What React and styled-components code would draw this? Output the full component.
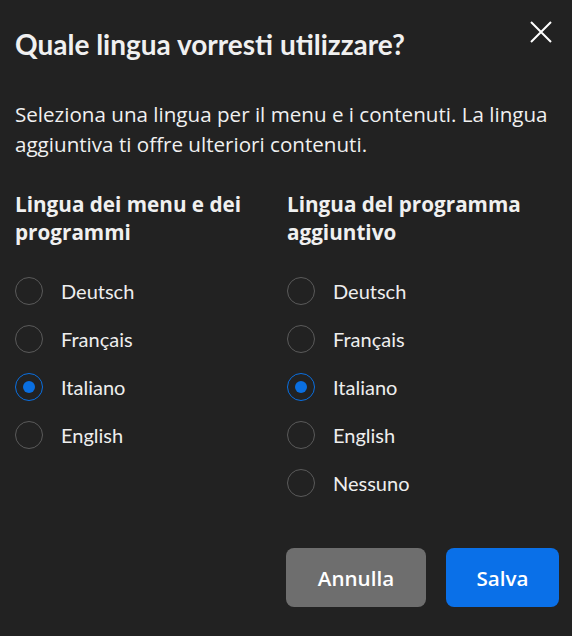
import React, { useState } from "react";
import styled, { createGlobalStyle } from "styled-components";

const GlobalStyle = createGlobalStyle`
  html, body {
    margin: 0;
    padding: 0;
    background: #222222;
  }
  body {
    font-family: Lato, "Noto Sans", sans-serif;
    color: #f2f2f2;
  }
`;

const Dialog = styled.div`
  width: 572px;
  height: 636px;
  box-sizing: border-box;
  background: #222222;
  padding: 24px 13px 0 15px;
  display: flex;
  flex-direction: column;
`;

const Header = styled.div`
  display: flex;
  justify-content: space-between;
  align-items: flex-start;
`;

const Title = styled.h1`
  margin: 0;
  font-size: 28px;
  line-height: 40px;
  font-weight: 700;
  color: #f0f0f0;
`;

const CloseButton = styled.button`
  background: none;
  border: none;
  padding: 0;
  margin: -4px 6px 0 0;
  width: 24px;
  height: 24px;
  cursor: pointer;
  display: flex;
  align-items: center;
  justify-content: center;
`;

const Intro = styled.p`
  margin: 35px 0 0 0;
  font-family: "Open Sans", sans-serif;
  font-size: 20.6px;
  line-height: 30px;
  color: #f0f0f0;
`;

const Columns = styled.div`
  display: grid;
  grid-template-columns: 272px 1fr;
  margin-top: 31px;
`;

const Column = styled.div`
  display: flex;
  flex-direction: column;
`;

const ColumnTitle = styled.h2`
  margin: 0 0 21px 0;
  font-family: "Open Sans", sans-serif;
  font-size: 20.7px;
  line-height: 28px;
  font-weight: 700;
  color: #f0f0f0;
`;

const Option = styled.label`
  display: flex;
  align-items: center;
  gap: 18px;
  height: 48px;
  cursor: pointer;
  font-size: 20px;
  color: #eeeeee;
`;

const Radio = styled.span`
  width: 28px;
  height: 28px;
  box-sizing: border-box;
  border-radius: 50%;
  border: 1.5px solid ${(p) => (p.$checked ? "#0a6fe0" : "#5a5a5a")};
  display: flex;
  align-items: center;
  justify-content: center;

  &::after {
    content: "";
    width: 12px;
    height: 12px;
    border-radius: 50%;
    background: #0a6fe0;
    display: ${(p) => (p.$checked ? "block" : "none")};
  }
`;

const Footer = styled.div`
  margin-top: auto;
  margin-bottom: 29px;
  display: flex;
  justify-content: flex-end;
  gap: 20px;
`;

const Button = styled.button`
  height: 59px;
  width: ${(p) => p.$w}px;
  padding: 0;
  border: none;
  border-radius: 8px;
  background: ${(p) => (p.$primary ? "#0a70e8" : "#6e6e6e")};
  color: #ffffff;
  font-family: "Open Sans", sans-serif;
  font-size: 20.6px;
  font-weight: 600;
  cursor: pointer;
`;

const RadioGroup = ({ title, options, value, onChange }) => (
  <Column>
    <ColumnTitle>{title}</ColumnTitle>
    {options.map((o) => (
      <Option key={o} onClick={() => onChange(o)}>
        <Radio $checked={value === o} />
        {o}
      </Option>
    ))}
  </Column>
);

export default function App() {
  const [menuLang, setMenuLang] = useState("Italiano");
  const [extraLang, setExtraLang] = useState("Italiano");

  return (
    <>
      <GlobalStyle />
      <Dialog>
        <Header>
          <Title>Quale lingua vorresti utilizzare?</Title>
          <CloseButton aria-label="Chiudi">
            <svg width="22" height="22" viewBox="0 0 22 22">
              <path d="M1 1 L21 21 M21 1 L1 21" stroke="#ffffff" strokeWidth="2" fill="none" />
            </svg>
          </CloseButton>
        </Header>
        <Intro>
          Seleziona una lingua per il menu e i contenuti. La lingua aggiuntiva ti offre ulteriori contenuti.
        </Intro>
        <Columns>
          <RadioGroup
            title={<>Lingua dei menu e dei<br />programmi</>}
            options={["Deutsch", "Français", "Italiano", "English"]}
            value={menuLang}
            onChange={setMenuLang}
          />
          <RadioGroup
            title={<>Lingua del programma<br />aggiuntivo</>}
            options={["Deutsch", "Français", "Italiano", "English", "Nessuno"]}
            value={extraLang}
            onChange={setExtraLang}
          />
        </Columns>
        <Footer>
          <Button $w={140}>Annulla</Button>
          <Button $primary $w={113}>Salva</Button>
        </Footer>
      </Dialog>
    </>
  );
}
